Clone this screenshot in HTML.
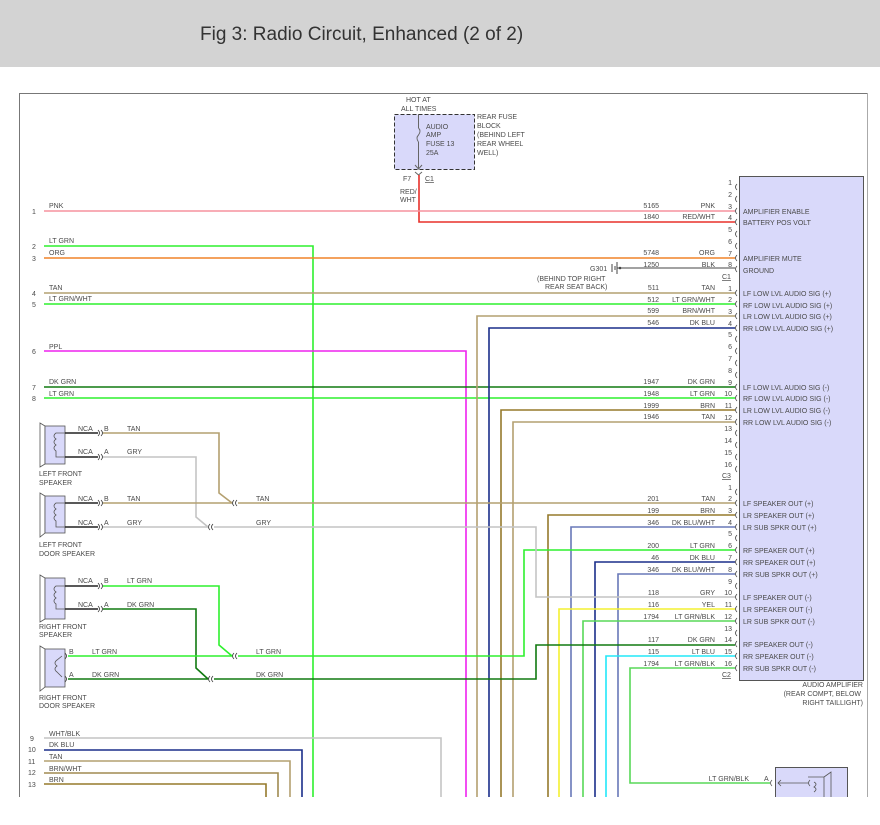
<!DOCTYPE html>
<html><head><meta charset="utf-8"><style>
html,body{margin:0;padding:0;background:#fff;width:880px;height:825px;overflow:hidden}
svg{display:block}
text{font-family:"Liberation Sans",sans-serif;font-size:7px;fill:#4a4a4a}
.r{text-anchor:end}
.w{fill:none;stroke-width:1.6}
</style></head><body>
<svg width="880" height="825" viewBox="0 0 880 825" xmlns="http://www.w3.org/2000/svg">
<rect x="0" y="0" width="880" height="67" fill="#d3d3d3"/>
<text x="200" y="40" style="font-size:19px;fill:#333">Fig 3: Radio Circuit, Enhanced (2 of 2)</text>
<rect x="19.5" y="93.5" width="848" height="720" fill="none" stroke="#777" stroke-width="1"/>

<!-- fuse -->
<rect x="394.5" y="114.5" width="80" height="55" fill="#d9d9fa" stroke="#333" stroke-dasharray="4,2"/>
<text x="406" y="102">HOT AT</text><text x="401" y="111">ALL TIMES</text>
<text x="426" y="129">AUDIO</text><text x="426" y="137">AMP</text><text x="426" y="146">FUSE 13</text><text x="426" y="155">25A</text>
<text x="477" y="119">REAR FUSE</text><text x="477" y="128">BLOCK</text><text x="477" y="137">(BEHIND LEFT</text><text x="477" y="146">REAR WHEEL</text><text x="477" y="155">WELL)</text>
<path d="M418.5 114 V128 M418.5 142 V168 M415 165 L418.5 169 L422 165" fill="none" stroke="#666"/>
<path d="M418.5 128 q3 3 0 7 q-3 3 0 7" fill="none" stroke="#666"/>
<path d="M415 172 L418.5 175 L422 172" fill="none" stroke="#666"/>
<text x="403" y="181">F7</text><text x="425" y="181" style="text-decoration:underline">C1</text>
<text x="400" y="194">RED/</text><text x="400" y="202">WHT</text>
<polyline class="w" stroke="#e8302a" points="419,175 419,222 735,222"/>

<!-- amp box -->
<rect x="739.5" y="176.5" width="124" height="504" fill="#d9d9fa" stroke="#555"/>
<g>
<text x="743" y="214">AMPLIFIER ENABLE</text><text x="743" y="225">BATTERY POS VOLT</text>
<text x="743" y="261">AMPLIFIER MUTE</text><text x="743" y="273">GROUND</text>
<text x="743" y="296">LF LOW LVL AUDIO SIG (+)</text><text x="743" y="308">RF LOW LVL AUDIO SIG (+)</text>
<text x="743" y="319">LR LOW LVL AUDIO SIG (+)</text><text x="743" y="331">RR LOW LVL AUDIO SIG (+)</text>
<text x="743" y="390">LF LOW LVL AUDIO SIG (-)</text><text x="743" y="401">RF LOW LVL AUDIO SIG (-)</text>
<text x="743" y="413">LR LOW LVL AUDIO SIG (-)</text><text x="743" y="425">RR LOW LVL AUDIO SIG (-)</text>
<text x="743" y="506">LF SPEAKER OUT (+)</text><text x="743" y="518">LR SPEAKER OUT (+)</text><text x="743" y="530">LR SUB SPKR OUT (+)</text>
<text x="743" y="553">RF SPEAKER OUT (+)</text><text x="743" y="565">RR SPEAKER OUT (+)</text><text x="743" y="577">RR SUB SPKR OUT (+)</text>
<text x="743" y="600">LF SPEAKER OUT (-)</text><text x="743" y="612">LR SPEAKER OUT (-)</text><text x="743" y="624">LR SUB SPKR OUT (-)</text>
<text x="743" y="647">RF SPEAKER OUT (-)</text><text x="743" y="659">RR SPEAKER OUT (-)</text><text x="743" y="671">RR SUB SPKR OUT (-)</text>
<text class="r" x="863" y="687">AUDIO AMPLIFIER</text><text class="r" x="861" y="696">(REAR COMPT, BELOW</text><text class="r" x="863" y="705">RIGHT TAILLIGHT)</text>
</g>

<!-- pin numbers and brackets -->
<g id="pins">
<text class="r" x="732" y="185">1</text><text class="r" x="732" y="197">2</text><text class="r" x="732" y="209">3</text><text class="r" x="732" y="220">4</text><text class="r" x="732" y="232">5</text><text class="r" x="732" y="244">6</text><text class="r" x="732" y="256">7</text><text class="r" x="732" y="267">8</text>
<text x="722" y="279" style="text-decoration:underline">C1</text>
<text class="r" x="732" y="291">1</text><text class="r" x="732" y="302">2</text><text class="r" x="732" y="314">3</text><text class="r" x="732" y="326">4</text><text class="r" x="732" y="337">5</text><text class="r" x="732" y="349">6</text><text class="r" x="732" y="361">7</text><text class="r" x="732" y="373">8</text>
<text class="r" x="732" y="385">9</text><text class="r" x="732" y="396">10</text><text class="r" x="732" y="408">11</text><text class="r" x="732" y="420">12</text><text class="r" x="732" y="431">13</text><text class="r" x="732" y="443">14</text><text class="r" x="732" y="455">15</text><text class="r" x="732" y="467">16</text>
<text x="722" y="478" style="text-decoration:underline">C3</text>
<text class="r" x="732" y="490">1</text><text class="r" x="732" y="501">2</text><text class="r" x="732" y="513">3</text><text class="r" x="732" y="525">4</text><text class="r" x="732" y="536">5</text><text class="r" x="732" y="548">6</text><text class="r" x="732" y="560">7</text><text class="r" x="732" y="572">8</text>
<text class="r" x="732" y="584">9</text><text class="r" x="732" y="595">10</text><text class="r" x="732" y="607">11</text><text class="r" x="732" y="619">12</text><text class="r" x="732" y="631">13</text><text class="r" x="732" y="642">14</text><text class="r" x="732" y="654">15</text><text class="r" x="732" y="666">16</text>
<text x="722" y="677" style="text-decoration:underline">C2</text>
</g>
<path fill="none" stroke="#444" stroke-width="0.8" d="
M737 184 q-3 3 0 6 M737 196 q-3 3 0 6 M737 208 q-3 3 0 6 M737 219 q-3 3 0 6 M737 231 q-3 3 0 6 M737 243 q-3 3 0 6 M737 255 q-3 3 0 6 M737 266 q-3 3 0 6
M737 290 q-3 3 0 6 M737 301 q-3 3 0 6 M737 313 q-3 3 0 6 M737 325 q-3 3 0 6 M737 336 q-3 3 0 6 M737 348 q-3 3 0 6 M737 360 q-3 3 0 6 M737 372 q-3 3 0 6
M737 384 q-3 3 0 6 M737 395 q-3 3 0 6 M737 407 q-3 3 0 6 M737 419 q-3 3 0 6 M737 430 q-3 3 0 6 M737 442 q-3 3 0 6 M737 454 q-3 3 0 6 M737 466 q-3 3 0 6
M737 489 q-3 3 0 6 M737 500 q-3 3 0 6 M737 512 q-3 3 0 6 M737 524 q-3 3 0 6 M737 535 q-3 3 0 6 M737 547 q-3 3 0 6 M737 559 q-3 3 0 6 M737 571 q-3 3 0 6
M737 583 q-3 3 0 6 M737 594 q-3 3 0 6 M737 606 q-3 3 0 6 M737 618 q-3 3 0 6 M737 630 q-3 3 0 6 M737 641 q-3 3 0 6 M737 653 q-3 3 0 6 M737 665 q-3 3 0 6"/>

<!-- left numbered wires -->
<g>
<text x="32" y="214">1</text><text x="32" y="249">2</text><text x="32" y="261">3</text><text x="32" y="296">4</text><text x="32" y="307">5</text><text x="32" y="354">6</text><text x="32" y="390">7</text><text x="32" y="401">8</text>
<text x="49" y="208">PNK</text><text x="49" y="243">LT GRN</text><text x="49" y="255">ORG</text><text x="49" y="290">TAN</text><text x="49" y="301">LT GRN/WHT</text><text x="49" y="349">PPL</text><text x="49" y="384">DK GRN</text><text x="49" y="396">LT GRN</text>
<text x="30" y="741">9</text><text x="28" y="752">10</text><text x="28" y="764">11</text><text x="28" y="775">12</text><text x="28" y="787">13</text>
<text x="49" y="736">WHT/BLK</text><text x="49" y="747">DK BLU</text><text x="49" y="759">TAN</text><text x="49" y="771">BRN/WHT</text><text x="49" y="782">BRN</text>
</g>
<polyline class="w" stroke="#f5929e" points="44,211 735,211"/>
<polyline class="w" stroke="#2ef02e" points="44,246 313,246 313,800"/>
<polyline class="w" stroke="#f08428" points="44,258 735,258"/>
<polyline class="w" stroke="#b4a070" points="44,293 735,293"/>
<polyline class="w" stroke="#2ef02e" points="44,304 735,304"/>
<polyline class="w" stroke="#ee22ee" points="44,351 466,351 466,800"/>
<polyline class="w" stroke="#107a10" points="44,387 735,387"/>
<polyline class="w" stroke="#2ef02e" points="44,398 735,398"/>
<polyline class="w" stroke="#c4c4c4" points="44,738 441,738 441,800"/>
<polyline class="w" stroke="#1a2e8a" points="44,750 302,750 302,800"/>
<polyline class="w" stroke="#b4a070" points="44,761 290,761 290,800"/>
<polyline class="w" stroke="#a08a50" points="44,773 278,773 278,800"/>
<polyline class="w" stroke="#957a2c" points="44,784 266,784 266,800"/>

<!-- verticals from C3 -->
<polyline class="w" stroke="#b4a070" points="735,316 477,316 477,800"/>
<polyline class="w" stroke="#1a2e8a" points="735,328 489,328 489,800"/>
<polyline class="w" stroke="#957a2c" points="735,410 501,410 501,800"/>
<polyline class="w" stroke="#b4a070" points="735,422 513,422 513,800"/>

<!-- ground -->
<text x="590" y="271">G301</text>
<path d="M612 264 v8 M615 266 v4 M617 262 v12 M617 268 H735" stroke="#444" fill="none"/>
<circle cx="620" cy="268" r="1.3" fill="#444"/>
<text x="537" y="281">(BEHIND TOP RIGHT</text><text x="545" y="289">REAR SEAT BACK)</text>

<!-- C2 wires -->
<polyline class="w" stroke="#b4a070" points="238,503 735,503"/>
<polyline class="w" stroke="#957a2c" points="735,515 548,515 548,800"/>
<polyline class="w" stroke="#6878b8" points="735,527 571,527 571,800"/>
<polyline class="w" stroke="#2ef02e" points="735,550 524,550 524,656 238,656"/>
<polyline class="w" stroke="#1a2e8a" points="735,562 595,562 595,800"/>
<polyline class="w" stroke="#6878b8" points="735,574 618,574 618,800"/>
<polyline class="w" stroke="#c4c4c4" points="735,597 536,597 536,527 214,527"/>
<polyline class="w" stroke="#f4f030" points="735,609 559,609 559,800"/>
<polyline class="w" stroke="#58d858" points="735,621 583,621 583,800"/>
<polyline class="w" stroke="#107a10" points="735,645 536,645 536,679 214,679"/>
<polyline class="w" stroke="#22e8f8" points="735,656 606,656 606,800"/>
<polyline class="w" stroke="#58d858" points="735,668 630,668 630,783 770,783"/>

<!-- right wire labels -->
<g>
<text class="r" x="659" y="208">5165</text><text class="r" x="715" y="208">PNK</text>
<text class="r" x="659" y="219">1840</text><text class="r" x="715" y="219">RED/WHT</text>
<text class="r" x="659" y="255">5748</text><text class="r" x="715" y="255">ORG</text>
<text class="r" x="659" y="267">1250</text><text class="r" x="715" y="267">BLK</text>
<text class="r" x="659" y="290">511</text><text class="r" x="715" y="290">TAN</text>
<text class="r" x="659" y="302">512</text><text class="r" x="715" y="302">LT GRN/WHT</text>
<text class="r" x="659" y="313">599</text><text class="r" x="715" y="313">BRN/WHT</text>
<text class="r" x="659" y="325">546</text><text class="r" x="715" y="325">DK BLU</text>
<text class="r" x="659" y="384">1947</text><text class="r" x="715" y="384">DK GRN</text>
<text class="r" x="659" y="396">1948</text><text class="r" x="715" y="396">LT GRN</text>
<text class="r" x="659" y="408">1999</text><text class="r" x="715" y="408">BRN</text>
<text class="r" x="659" y="419">1946</text><text class="r" x="715" y="419">TAN</text>
<text class="r" x="659" y="501">201</text><text class="r" x="715" y="501">TAN</text>
<text class="r" x="659" y="513">199</text><text class="r" x="715" y="513">BRN</text>
<text class="r" x="659" y="525">346</text><text class="r" x="715" y="525">DK BLU/WHT</text>
<text class="r" x="659" y="548">200</text><text class="r" x="715" y="548">LT GRN</text>
<text class="r" x="659" y="560">46</text><text class="r" x="715" y="560">DK BLU</text>
<text class="r" x="659" y="572">346</text><text class="r" x="715" y="572">DK BLU/WHT</text>
<text class="r" x="659" y="595">118</text><text class="r" x="715" y="595">GRY</text>
<text class="r" x="659" y="607">116</text><text class="r" x="715" y="607">YEL</text>
<text class="r" x="659" y="619">1794</text><text class="r" x="715" y="619">LT GRN/BLK</text>
<text class="r" x="659" y="642">117</text><text class="r" x="715" y="642">DK GRN</text>
<text class="r" x="659" y="654">115</text><text class="r" x="715" y="654">LT BLU</text>
<text class="r" x="659" y="666">1794</text><text class="r" x="715" y="666">LT GRN/BLK</text>
<text class="r" x="749" y="781">LT GRN/BLK</text><text x="764" y="781">A</text>
</g>

<!-- speakers -->
<g fill="#d9d9fa" stroke="#555" stroke-width="0.8">
<path d="M40 423 L45 426 V464 L40 467 Z" fill="#fff"/><rect x="45" y="426" width="20" height="38"/>
<path d="M40 493 L45 496 V533 L40 537 Z" fill="#fff"/><rect x="45" y="496" width="20" height="37"/>
<path d="M40 575 L45 578 V619 L40 622 Z" fill="#fff"/><rect x="45" y="578" width="20" height="41"/>
<path d="M40 646 L45 649 V687 L40 691 Z" fill="#fff"/><rect x="45" y="649" width="20" height="38"/>
</g>
<path fill="none" stroke="#555" stroke-width="0.8" d="M65 433 H56 q-4 3 0 6 q-4 3 0 6 q-4 3 0 6 v6 H65 M65 503 H56 q-4 3 0 6 q-4 3 0 6 q-4 3 0 6 v6 H65 M65 586 H56 q-4 3 0 6 q-4 3 0 6 q-4 3 0 6 v5 H65 M62 656 l-5 4 q-4 3 0 6 q-4 3 0 6 l5 5"/>
<path stroke="#222" stroke-width="1.6" fill="none" d="M65 433 H98 M65 457 H98 M65 503 H98 M65 527 H98 M65 586 H98 M65 609 H98"/>
<path fill="none" stroke="#333" stroke-width="0.8" d="M98 430 q3 3 0 6 M101 430 q3 3 0 6 M98 454 q3 3 0 6 M101 454 q3 3 0 6 M98 500 q3 3 0 6 M101 500 q3 3 0 6 M98 524 q3 3 0 6 M101 524 q3 3 0 6 M98 583 q3 3 0 6 M101 583 q3 3 0 6 M98 606 q3 3 0 6 M101 606 q3 3 0 6 M65 653 q3 3 0 6 M65 676 q3 3 0 6
M234 500 q-3 3 0 6 M237 500 q-3 3 0 6 M210 524 q-3 3 0 6 M213 524 q-3 3 0 6 M234 653 q-3 3 0 6 M237 653 q-3 3 0 6 M210 676 q-3 3 0 6 M213 676 q-3 3 0 6"/>
<polyline class="w" stroke="#b4a070" points="103,433 219,433 219,493 232,503"/>
<polyline class="w" stroke="#c4c4c4" points="103,457 196,457 196,517 208,527"/>
<polyline class="w" stroke="#b4a070" points="103,503 232,503"/>
<polyline class="w" stroke="#c4c4c4" points="103,527 208,527"/>
<polyline class="w" stroke="#2ef02e" points="103,586 219,586 219,645 232,656"/>
<polyline class="w" stroke="#107a10" points="103,609 196,609 196,668 208,679"/>
<polyline class="w" stroke="#2ef02e" points="68,656 232,656"/>
<polyline class="w" stroke="#107a10" points="68,679 208,679"/>
<g>
<text x="78" y="431">NCA</text><text x="104" y="431">B</text><text x="127" y="431">TAN</text>
<text x="78" y="454">NCA</text><text x="104" y="454">A</text><text x="127" y="454">GRY</text>
<text x="39" y="476">LEFT FRONT</text><text x="39" y="485">SPEAKER</text>
<text x="78" y="501">NCA</text><text x="104" y="501">B</text><text x="127" y="501">TAN</text><text x="256" y="501">TAN</text>
<text x="78" y="525">NCA</text><text x="104" y="525">A</text><text x="127" y="525">GRY</text><text x="256" y="525">GRY</text>
<text x="39" y="547">LEFT FRONT</text><text x="39" y="556">DOOR SPEAKER</text>
<text x="78" y="583">NCA</text><text x="104" y="583">B</text><text x="127" y="583">LT GRN</text>
<text x="78" y="607">NCA</text><text x="104" y="607">A</text><text x="127" y="607">DK GRN</text>
<text x="39" y="629">RIGHT FRONT</text><text x="39" y="637">SPEAKER</text>
<text x="69" y="654">B</text><text x="92" y="654">LT GRN</text><text x="256" y="654">LT GRN</text>
<text x="69" y="677">A</text><text x="92" y="677">DK GRN</text><text x="256" y="677">DK GRN</text>
<text x="39" y="700">RIGHT FRONT</text><text x="39" y="708">DOOR SPEAKER</text>
</g>

<!-- bottom right speaker -->
<rect x="775.5" y="767.5" width="72" height="40" fill="#d9d9fa" stroke="#555"/>
<path fill="none" stroke="#555" stroke-width="0.8" d="M772 780 q-3 3 0 6 M778 783 H808 M781 780 l-3 3 l3 3 M810 780 q-3 3 0 6 M808 777 h16 v25 M824 777 l7 -5 v30 M814 782 q4 2 0 5 q4 2 0 5"/>

<rect x="0" y="797" width="880" height="28" fill="#fff"/>
<line x1="867.5" y1="93" x2="867.5" y2="797" stroke="#aaa"/>
</svg>
</body></html>
